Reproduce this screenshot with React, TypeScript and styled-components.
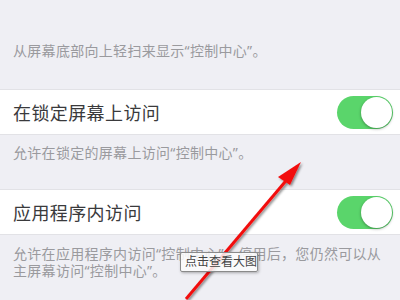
import React from "react";
import styled, { createGlobalStyle } from "styled-components";

const GlobalStyle = createGlobalStyle`
  body {
    margin: 0;
    font-family: "Noto Sans", "Noto Sans CJK SC", sans-serif;
  }
`;

const Screen = styled.div`
  position: relative;
  width: 400px;
  height: 300px;
  overflow: hidden;
  background: #efeff4;
`;

const Footer = styled.div<{ $top: number; $height: number }>`
  box-sizing: border-box;
  height: ${(p) => p.$height}px;
  padding: ${(p) => p.$top}px 8px 0 13px;
  font-size: 14px;
  line-height: 16.5px;
  letter-spacing: 0.3px;
  color: #9a9a9e;
`;

const Row = styled.div`
  box-sizing: border-box;
  height: 46px;
  display: flex;
  align-items: center;
  justify-content: space-between;
  padding: 0 7px 0 13px;
  background: #fff;
  border-top: 1px solid #e2e2e6;
  border-bottom: 1px solid #e2e2e6;
`;

const Label = styled.span`
  font-size: 18px;
  letter-spacing: 0.4px;
  color: #3a3a3c;
`;

const Toggle = styled.div`
  position: relative;
  width: 56px;
  height: 33px;
  border-radius: 17px;
  background: #5ad56b;
`;

const Knob = styled.div`
  position: absolute;
  right: 1px;
  top: 1px;
  width: 31px;
  height: 31px;
  border-radius: 50%;
  background: #fff;
  box-shadow: 0 1px 3px rgba(0, 0, 0, 0.35);
`;

const Arrow = styled.svg`
  position: absolute;
  left: 0;
  top: 0;
`;

const Tip = styled.div`
  position: absolute;
  left: 180px;
  top: 252px;
  box-sizing: border-box;
  width: 78px;
  height: 20px;
  padding-left: 4px;
  border: 1px solid #8a8a8a;
  border-radius: 2px;
  background: rgba(252, 252, 252, 0.85);
  box-shadow: 1px 1px 3px rgba(0, 0, 0, 0.3);
  font-size: 12px;
  line-height: 18px;
  color: #444;
`;

const Switch = () => (
  <Toggle>
    <Knob />
  </Toggle>
);

export default function App() {
  return (
    <>
      <GlobalStyle />
      <Screen>
        <Footer $top={43} $height={89}>从屏幕底部向上轻扫来显示“控制中心”。</Footer>
        <Row>
          <Label>在锁定屏幕上访问</Label>
          <Switch />
        </Row>
        <Footer $top={10} $height={54}>允许在锁定的屏幕上访问“控制中心”。</Footer>
        <Row>
          <Label>应用程序内访问</Label>
          <Switch />
        </Row>
        <Footer $top={11} $height={62}>
          允许在应用程序内访问“控制中心”。停用后，您仍然可以从主屏幕访问“控制中心”。
        </Footer>
        <Arrow width="400" height="300" viewBox="0 0 400 300">
          <defs>
            <filter id="sh" x="-20%" y="-20%" width="140%" height="140%">
              <feDropShadow dx="1.5" dy="1.5" stdDeviation="1.2" floodColor="#000" floodOpacity="0.45" />
            </filter>
          </defs>
          <g filter="url(#sh)">
            <line x1="186" y1="299" x2="290" y2="176" stroke="#f21010" strokeWidth="3" />
            <polygon points="301,162 278,177 290,185" fill="#f21010" />
          </g>
        </Arrow>
        <Tip>点击查看大图</Tip>
      </Screen>
    </>
  );
}
